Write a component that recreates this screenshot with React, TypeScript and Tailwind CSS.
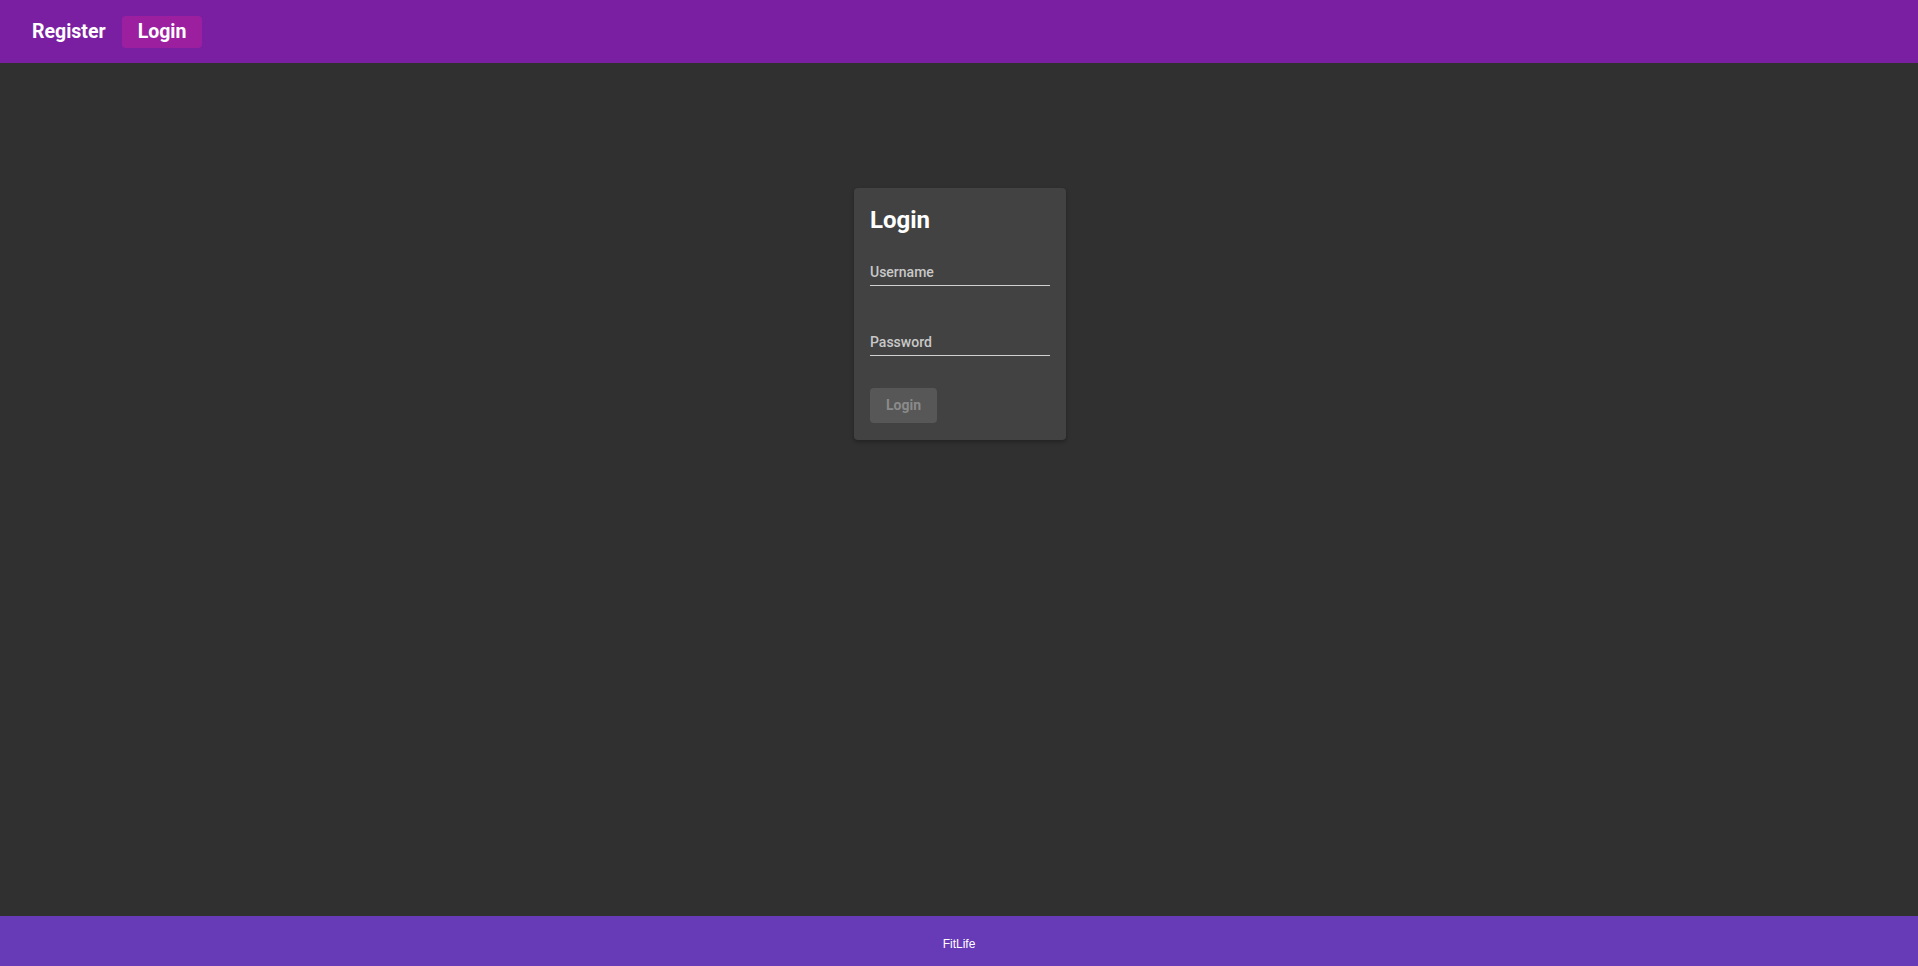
export default function App() {
  return (
    <div className="flex min-h-screen flex-col bg-[#303030] font-['Roboto',sans-serif]">
      <header className="flex h-[63px] items-center bg-[#7b1fa2] pl-4">
        <button type="button" className="h-8 rounded px-4 text-[19.5px] font-bold leading-8 text-white">
          Register
        </button>
        <button type="button" className="h-8 rounded bg-[#9c1fa0] px-4 text-[19.5px] font-bold leading-8 text-white">
          Login
        </button>
      </header>

      <main className="flex flex-1 justify-center pt-[125px]">
        <div className="ml-[2px] h-fit w-[212px] rounded bg-[#424242] px-4 pt-4 pb-[17px] shadow-[0_2px_4px_rgba(0,0,0,0.3)]">
          <h1 className="text-[24px] font-bold leading-8 text-white">Login</h1>
          <div className="mt-[26px] border-b border-[#d0d0d0] pb-[3px] text-[14px] font-medium leading-5 text-[#c8c8c8]">
            Username
          </div>
          <div className="mt-[46px] border-b border-[#d0d0d0] pb-[3px] text-[14px] font-medium leading-5 text-[#c8c8c8]">
            Password
          </div>
          <button
            type="button"
            disabled
            className="mt-8 h-[35px] w-[67px] rounded bg-[#575757] text-[14px] font-bold text-[#8a8a8a]"
          >
            Login
          </button>
        </div>
      </main>

      <footer className="flex h-[50px] items-center justify-center bg-[#673ab7] pt-[5px] font-['Liberation_Sans',sans-serif] text-[12px] text-white">
        FitLife
      </footer>
    </div>
  );
}
